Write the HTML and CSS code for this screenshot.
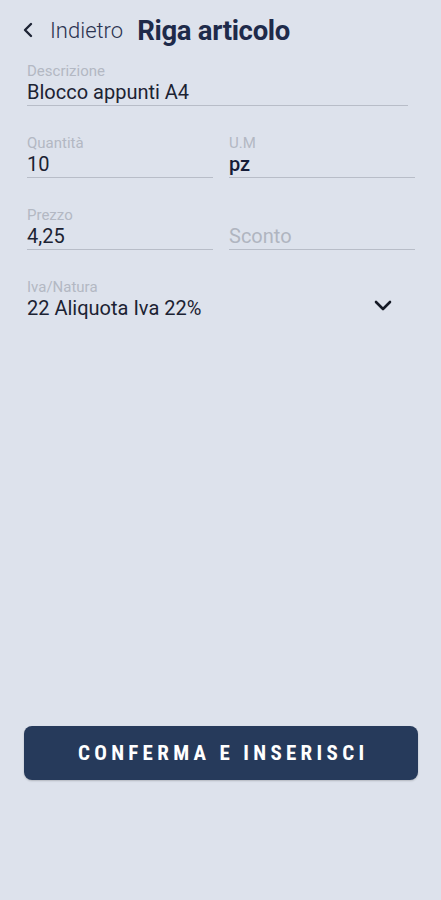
FILE: index.html
```html
<!DOCTYPE html>
<html lang="it">
<head>
  <meta charset="UTF-8" />
  <meta name="viewport" content="width=device-width, initial-scale=1.0"/>
  <title>Riga articolo</title>
  <link rel="stylesheet" href="styles.css">
</head>
<body>
  <div class="page">
    <!-- ===== header ===== -->
    <div class="header">
      <a class="back" href="#">
        <svg class="back-icon" width="12" height="16" viewBox="0 0 12 16">
          <path d="M9 2 L3 8 L9 14" fill="none" stroke="#1e2435" stroke-width="2.4" stroke-linecap="round" stroke-linejoin="round"/>
        </svg>
        <span>Indietro</span>
      </a>
      <h1>Riga articolo</h1>
    </div>

    <!-- ===== campi ===== -->
    <div class="field wide">
      <label>Descrizione</label>
      <div class="value">Blocco appunti A4</div>
    </div>

    <div class="row">
      <div class="field">
        <label>Quantità</label>
        <div class="value">10</div>
      </div>
      <div class="field">
        <label>U.M</label>
        <div class="value strong">pz</div>
      </div>
    </div>

    <div class="row">
      <div class="field">
        <label>Prezzo</label>
        <div class="value">4,25</div>
      </div>
      <div class="field">
        <label>&nbsp;</label>
        <div class="value placeholder">Sconto</div>
      </div>
    </div>

    <div class="field select">
      <div>
        <label>Iva/Natura</label>
        <div class="value">22 Aliquota Iva 22%</div>
      </div>
      <svg class="chevron" width="20" height="12" viewBox="0 0 20 12">
        <path d="M3 2 L10 9 L17 2" fill="none" stroke="#151a26" stroke-width="2.6" stroke-linecap="round" stroke-linejoin="round"/>
      </svg>
    </div>

    <div class="spacer"></div>

    <button class="confirm">CONFERMA E INSERISCI</button>
  </div>
</body>
</html>
```

FILE: styles.css
```css
/* ===== base ===== */
body {
  margin: 0;
  background: #dde2ec;
  font-family: Roboto, "Noto Sans", sans-serif;
  color: #1c2333;
}

.page {
  display: flex;
  flex-direction: column;
  height: 900px;
  padding: 0 26px 0 27px;
  box-sizing: border-box;
}

/* ===== header ===== */
.header {
  display: flex;
  align-items: center;
  height: 60px;
  margin-bottom: 2px;
  margin-left: -5px;
}

.back {
  display: flex;
  align-items: center;
  text-decoration: none;
  color: #2b3350;
  font-size: 22px;
  font-weight: 300;
}

.back-icon {
  margin-right: 16px;
}

.header h1 {
  margin: 0 0 0 14px;
  font-size: 27.5px;
  font-weight: 700;
  color: #1e2a4a;
  letter-spacing: -0.3px;
}

/* ===== fields ===== */
.field {
  border-bottom: 1px solid #b8bdc8;
  padding-bottom: 1px;
  margin-bottom: 28px;
}

.field.wide {
  margin-right: 7px;
}

.field label {
  display: block;
  font-size: 15px;
  line-height: 18px;
  color: #b3b8c3;
}

.value {
  font-size: 20px;
  line-height: 24px;
  color: #1c2333;
}

.value.strong {
  color: #151c38;
  font-weight: 500;
}

.value.placeholder {
  color: #b0b5c0;
}

.row {
  display: grid;
  grid-template-columns: 1fr 1fr;
  gap: 16px;
}

.select {
  display: flex;
  align-items: center;
  justify-content: space-between;
  border-bottom: none;
  padding-right: 22px;
}

.chevron {
  margin-top: 14px;
}

.spacer {
  flex: 1;
}

/* ===== button ===== */
.confirm {
  margin: 0 -3px 120px -3px;
  height: 54px;
  border: none;
  border-radius: 8px;
  background: #263a5b;
  color: #ffffff;
  font-family: "Liberation Sans Narrow", "Roboto Condensed", Roboto, sans-serif;
  font-size: 21px;
  font-weight: 700;
  letter-spacing: 4.3px;
  text-indent: 4.3px;
  box-shadow: 0 1px 2px rgba(0, 0, 0, 0.2);
  cursor: pointer;
}
```
